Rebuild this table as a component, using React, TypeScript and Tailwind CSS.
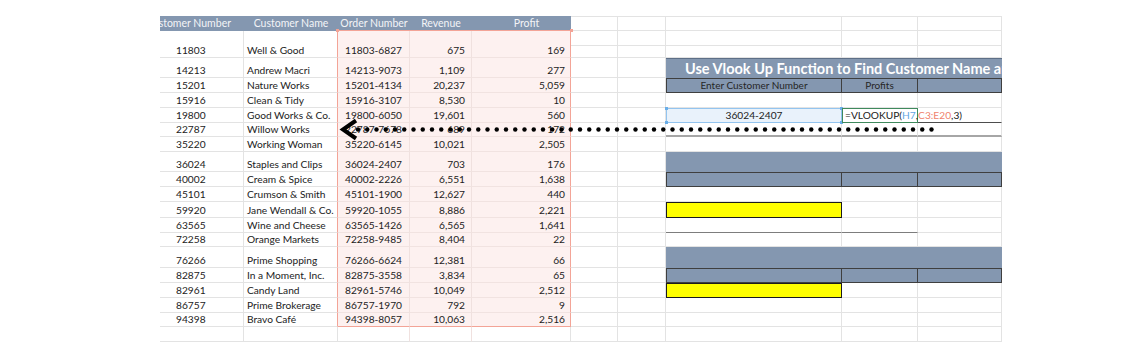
import React from 'react';

type Kind = 'grid' | 'title' | 'sub' | 'input' | 'arrow' | 'band' | 'bandSub' | 'yellow' | 'underline';

type Row = {
  h: string;
  k: Kind;
  d?: [string, string, string, string, string];
  open?: boolean; // left cells without a bottom gridline
};

const rows: Row[] = [
  { h: 'h-[15px]', k: 'grid', open: true },
  { h: 'h-[12px]', k: 'grid', d: ['11803', 'Well & Good', '11803-6827', '675', '169'] },
  { h: 'h-[20px]', k: 'title', d: ['14213', 'Andrew Macri', '14213-9073', '1,109', '277'] },
  { h: 'h-[15px]', k: 'sub', d: ['15201', 'Nature Works', '15201-4134', '20,237', '5,059'] },
  { h: 'h-[15px]', k: 'grid', d: ['15916', 'Clean & Tidy', '15916-3107', '8,530', '10'] },
  { h: 'h-[15px]', k: 'input', d: ['19800', 'Good Works & Co.', '19800-6050', '19,601', '560'] },
  { h: 'h-[14px]', k: 'arrow', d: ['22787', 'Willow Works', '22787-7678', '689', '172'] },
  { h: 'h-[15px]', k: 'grid', d: ['35220', 'Working Woman', '35220-6145', '10,021', '2,505'] },
  { h: 'h-[20px]', k: 'band', d: ['36024', 'Staples and Clips', '36024-2407', '703', '176'] },
  { h: 'h-[15px]', k: 'bandSub', d: ['40002', 'Cream & Spice', '40002-2226', '6,551', '1,638'] },
  { h: 'h-[15px]', k: 'grid', d: ['45101', 'Crumson & Smith', '45101-1900', '12,627', '440'] },
  { h: 'h-[16px]', k: 'yellow', d: ['59920', 'Jane Wendall & Co.', '59920-1055', '8,886', '2,221'] },
  { h: 'h-[15px]', k: 'underline', d: ['63565', 'Wine and Cheese', '63565-1426', '6,565', '1,641'] },
  { h: 'h-[14px]', k: 'grid', d: ['72258', 'Orange Markets', '72258-9485', '8,404', '22'] },
  { h: 'h-[21px]', k: 'band', d: ['76266', 'Prime Shopping', '76266-6624', '12,381', '66'] },
  { h: 'h-[15px]', k: 'bandSub', d: ['82875', 'In a Moment, Inc.', '82875-3558', '3,834', '65'] },
  { h: 'h-[15px]', k: 'yellow', d: ['82961', 'Candy Land', '82961-5746', '10,049', '2,512'] },
  { h: 'h-[15px]', k: 'grid', d: ['86757', 'Prime Brokerage', '86757-1970', '792', '9'] },
  { h: 'h-[14px]', k: 'grid', d: ['94398', 'Bravo Café', '94398-8057', '10,063', '2,516'] },
  { h: 'h-[15px]', k: 'grid' },
];

const LAST_PINK = 18;

function LeftCells({ r, i }: { r: Row; i: number }) {
  const pink = i <= LAST_PINK;
  const last = i === LAST_PINK;
  const d = r.d ?? ['', '', '', '', ''];
  const bottom = r.open ? '' : 'border-b border-b-[#e3e3e3]';
  const pinkBottom = r.open ? '' : last ? 'border-b border-b-[#f3a497]' : 'border-b border-b-[#f1e3e1]';
  const bg = pink ? 'bg-[#fdf1f0]' : '';
  return (
    <>
      <div className={`w-[84px] shrink-0 flex items-end pl-[16px] border-r border-r-[#e3e3e3] ${bottom}`}>{d[0]}</div>
      <div className={`w-[94px] shrink-0 flex items-end pl-[3px] whitespace-nowrap border-r ${pink ? 'border-r-[#f3a497]' : 'border-r-[#e3e3e3]'} ${bottom}`}>
        {d[1]}
      </div>
      <div className={`w-[72px] shrink-0 flex items-end justify-center border-r border-r-[#f0e1df] ${bg} ${pink ? pinkBottom : bottom}`}>{d[2]}</div>
      <div className={`w-[62px] shrink-0 flex items-end justify-end pr-[6px] border-r border-r-[#f0e1df] ${bg} ${pink ? pinkBottom : bottom}`}>{d[3]}</div>
      <div className={`w-[99px] shrink-0 flex items-end justify-end pr-[5px] border-r ${pink ? 'border-r-[#f3a497]' : 'border-r-[#e3e3e3]'} ${bg} ${pink ? pinkBottom : bottom}`}>
        {d[4]}
      </div>
      <div className="w-[47px] shrink-0 border-b border-r border-[#e3e3e3]" />
      <div className="w-[48px] shrink-0 border-b border-r border-[#e3e3e3]" />
    </>
  );
}

function RightCells({ k }: { k: Kind }) {
  const grid = 'border-b border-r border-[#e3e3e3]';
  if (k === 'title') {
    return (
      <div className="w-[336px] shrink-0 bg-[#8497b0] border-t border-t-[#5e6f87] flex items-center pl-[19px] text-white font-bold text-[14.5px] whitespace-nowrap overflow-hidden">
        Use Vlook Up Function to Find Customer Name and Profit
      </div>
    );
  }
  if (k === 'band') {
    return <div className="w-[336px] shrink-0 bg-[#8497b0]" />;
  }
  if (k === 'sub' || k === 'bandSub') {
    return (
      <>
        <div className="w-[176px] shrink-0 bg-[#8497b0] border border-[#3f3f3f] flex items-center justify-center text-[#262626] text-[10px]">
          {k === 'sub' ? 'Enter Customer Number' : ''}
        </div>
        <div className="w-[76px] shrink-0 bg-[#8497b0] border-t border-b border-r border-[#3f3f3f] flex items-center justify-center text-[#262626] text-[10px]">
          {k === 'sub' ? 'Profits' : ''}
        </div>
        <div className="w-[84px] shrink-0 bg-[#8497b0] border-t border-b border-r border-[#3f3f3f]" />
      </>
    );
  }
  if (k === 'input') {
    return (
      <>
        <div className="w-[176px] shrink-0 relative bg-[#e9f2fb] border border-[#93c4ef] flex items-center justify-center">
          36024-2407
          <span className="absolute left-[-2px] top-[-2px] w-[3px] h-[3px] bg-[#6aaee8]" />
          <span className="absolute right-[-2px] top-[-2px] w-[3px] h-[3px] bg-[#6aaee8]" />
          <span className="absolute left-[-2px] bottom-[-2px] w-[3px] h-[3px] bg-[#6aaee8]" />
          <span className="absolute right-[-2px] bottom-[-2px] w-[3px] h-[3px] bg-[#6aaee8]" />
        </div>
        <div className="w-[76px] shrink-0 relative z-10 border border-[#3f8a5d] flex items-center pl-[2px] whitespace-nowrap overflow-visible">
          <span>=VLOOKUP(</span>
          <span className="text-[#62a6e3]">H7</span>
          <span>,</span>
          <span className="text-[#f0826d]">C3:E20</span>
          <span>,3)</span>
          <span className="ml-[1px] w-px h-[11px] bg-[#111]" />
        </div>
        <div className="w-[84px] shrink-0 border-b border-b-[#4d4d4d] border-r border-r-[#e3e3e3]" />
      </>
    );
  }
  if (k === 'arrow') {
    return (
      <>
        <div className="w-[176px] shrink-0 border-b-2 border-b-[#a6a6a6] border-r border-r-[#e3e3e3]" />
        <div className="w-[76px] shrink-0 border-b-2 border-b-[#a6a6a6] border-r border-r-[#e3e3e3]" />
        <div className="w-[84px] shrink-0 border-b-2 border-b-[#a6a6a6] border-r border-r-[#e3e3e3]" />
      </>
    );
  }
  if (k === 'yellow') {
    return (
      <>
        <div className="w-[176px] shrink-0 bg-[#ffff00] border border-[#1c1c1c]" />
        <div className={`w-[76px] shrink-0 ${grid}`} />
        <div className={`w-[84px] shrink-0 ${grid}`} />
      </>
    );
  }
  if (k === 'underline') {
    return (
      <>
        <div className="w-[176px] shrink-0 border-b border-b-[#7d7d7d] border-r border-r-[#e3e3e3]" />
        <div className="w-[76px] shrink-0 border-b border-b-[#7d7d7d] border-r border-r-[#e3e3e3]" />
        <div className={`w-[84px] shrink-0 ${grid}`} />
      </>
    );
  }
  return (
    <>
      <div className={`w-[176px] shrink-0 ${grid}`} />
      <div className={`w-[76px] shrink-0 ${grid}`} />
      <div className={`w-[84px] shrink-0 ${grid}`} />
    </>
  );
}

function DottedArrow() {
  const dots = Array.from({ length: 63 }, (_, n) => 198 + n * 9.25);
  return (
    <svg className="absolute left-0 top-0 pointer-events-none z-20" width={842} height={330}>
      <polyline points="196,104.5 183,113.5 196,122.5" fill="none" stroke="#000" strokeWidth={4} strokeLinejoin="miter" />
      {dots.map((x) => (
        <circle key={x} cx={x} cy={113.5} r={2.2} fill="#000" />
      ))}
    </svg>
  );
}

export default function App() {
  return (
    <div className="w-full h-[360px] bg-white pt-[16px] pl-[160px] overflow-hidden font-['Lato','Open_Sans',sans-serif] text-[10.2px] leading-[13px] text-[#222]">
      <div className="relative w-[842px] overflow-hidden">
        {/* column headings */}
        <div className="flex h-[15px] text-[10.5px]">
          <div className="w-[84px] shrink-0 bg-[#8497b0] text-[#f3f4f7] flex items-center justify-end pr-[13px] whitespace-nowrap overflow-hidden">
            Customer Number
          </div>
          <div className="w-[94px] shrink-0 bg-[#8497b0] text-[#f3f4f7] flex items-center justify-center">Customer Name</div>
          <div className="w-[72px] shrink-0 relative bg-[#8497b0] text-[#f3f4f7] flex items-center justify-center border-b border-b-[#f3a497]">
            Order Number
            <span className="absolute left-[-2px] bottom-[-2px] w-[3px] h-[3px] bg-[#f3a497]" />
          </div>
          <div className="w-[62px] shrink-0 bg-[#8497b0] text-[#f3f4f7] flex items-center justify-center border-b border-b-[#f3a497]">Revenue</div>
          <div className="w-[99px] shrink-0 relative bg-[#8497b0] text-[#f3f4f7] flex items-center justify-center pl-[10px] border-b border-b-[#f3a497]">
            Profit
            <span className="absolute right-[-2px] bottom-[-2px] w-[3px] h-[3px] bg-[#f3a497]" />
          </div>
          <div className="w-[47px] shrink-0 border-t border-b border-r border-[#e3e3e3]" />
          <div className="w-[48px] shrink-0 border-t border-b border-r border-[#e3e3e3]" />
          <div className="w-[176px] shrink-0 border-t border-b border-r border-[#e3e3e3]" />
          <div className="w-[76px] shrink-0 border-t border-b border-r border-[#e3e3e3]" />
          <div className="w-[84px] shrink-0 border-t border-b border-r border-[#e3e3e3]" />
        </div>

        {rows.map((r, i) => (
          <div key={i} className={`flex ${r.h}`}>
            <LeftCells r={r} i={i} />
            <RightCells k={r.k} />
          </div>
        ))}

        <DottedArrow />
      </div>
    </div>
  );
}
